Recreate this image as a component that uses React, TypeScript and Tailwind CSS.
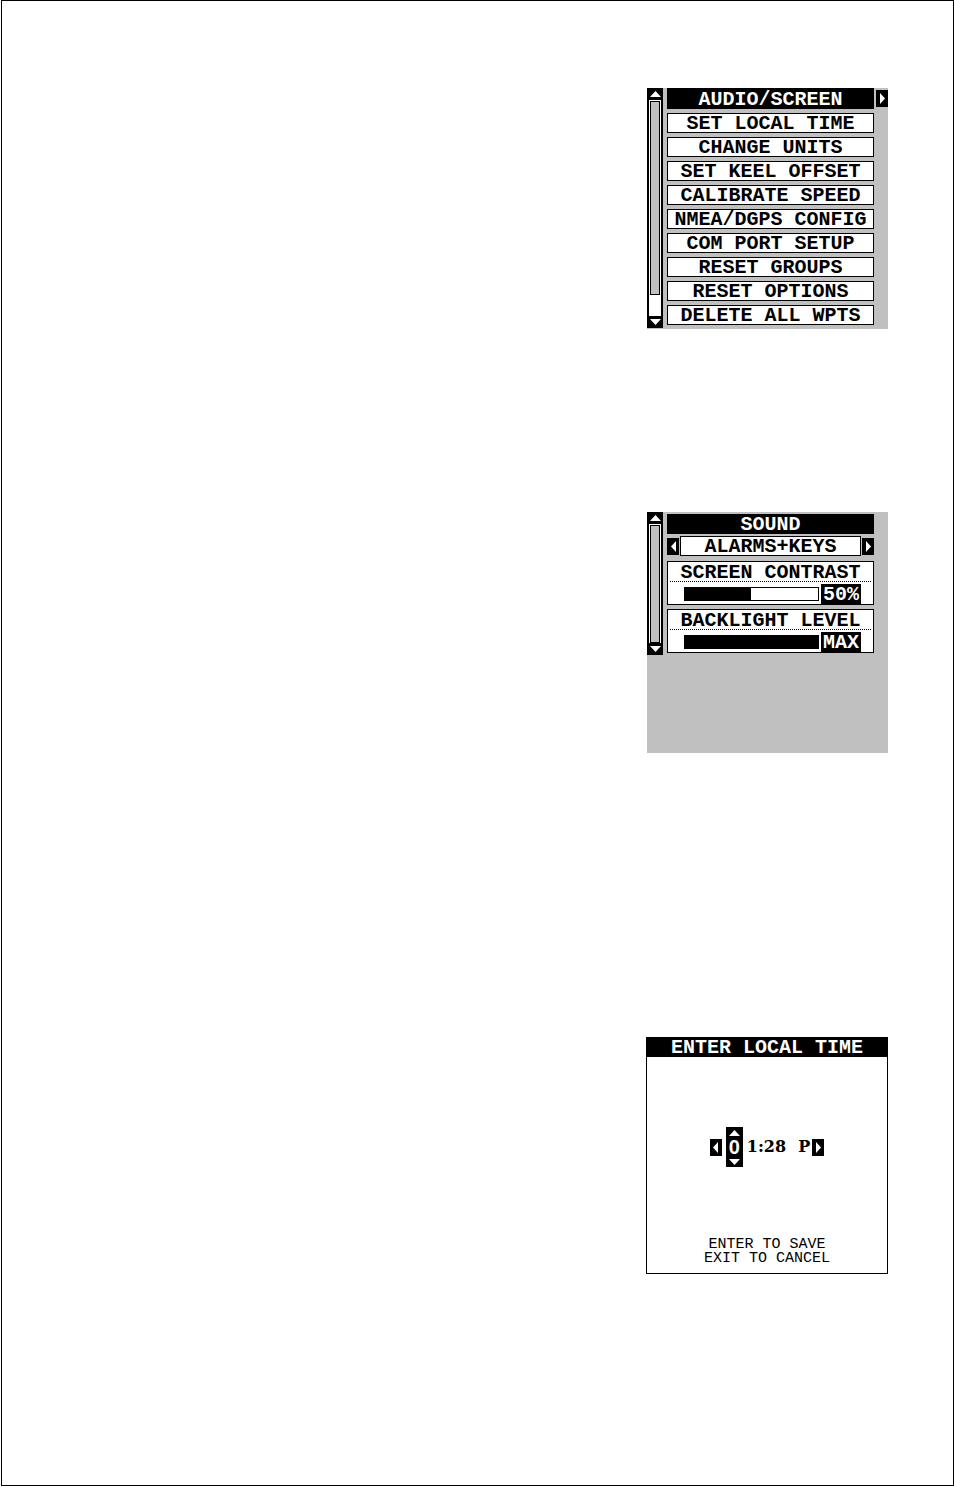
import { useState } from 'react';

type Direction = 'up' | 'down' | 'left' | 'right';

const ARROWS: Record<Direction, string> = {
  up: 'M5.5 0 11 6H0z',
  down: 'M0 0h11L5.5 6z',
  left: 'M5 0v11L0 5.5z',
  right: 'M0 0v11l5-5.5z',
};

const Arrow = ({ direction }: { direction: Direction }) => {
  const vertical = direction === 'up' || direction === 'down';

  return (
    <svg
      className={vertical ? 'w-[11px] h-[6px]' : 'w-[5px] h-[11px]'}
      viewBox={vertical ? '0 0 11 6' : '0 0 5 11'}
      fill="white"
      aria-hidden="true"
    >
      <path d={ARROWS[direction]} />
    </svg>
  );
};

const SideButton = ({ direction, label }: { direction: 'left' | 'right'; label: string }) => (
  <button type="button" aria-label={label} className="flex h-[17px] w-3 shrink-0 items-center justify-center bg-black">
    <Arrow direction={direction} />
  </button>
);

const Scrollbar = ({ visible }: { visible: number }) => (
  <div className="flex w-4 shrink-0 flex-col bg-black">
    <button type="button" aria-label="Scroll up" className="flex h-3 items-center justify-center">
      <Arrow direction="up" />
    </button>
    <div className="mx-0.5 flex-1 bg-white px-px pt-px">
      <div className="border border-black bg-[#c0c0c0]" style={{ height: `${visible}%` }} />
    </div>
    <button type="button" aria-label="Scroll down" className="flex h-3 items-center justify-center">
      <Arrow direction="down" />
    </button>
  </div>
);

const MENU_ITEMS = [
  'SET LOCAL TIME',
  'CHANGE UNITS',
  'SET KEEL OFFSET',
  'CALIBRATE SPEED',
  'NMEA/DGPS CONFIG',
  'COM PORT SETUP',
  'RESET GROUPS',
  'RESET OPTIONS',
  'DELETE ALL WPTS',
];

const MenuScreen = () => (
  <section className="flex w-[241px] gap-1 bg-[#c0c0c0] pb-px">
    <Scrollbar visible={90} />
    <div className="flex flex-1 flex-col gap-1 pb-[3px]">
      <div className="flex items-center gap-0.5">
        <button type="button" className="h-[21px] flex-1 bg-black pt-0.5 leading-5 text-white">
          AUDIO/SCREEN
        </button>
        <SideButton direction="right" label="Open audio and screen" />
      </div>
      {MENU_ITEMS.map((item) => (
        <button
          key={item}
          type="button"
          className="mr-3.5 h-5 whitespace-nowrap border border-black bg-white leading-5"
        >
          {item}
        </button>
      ))}
    </div>
  </section>
);

interface LevelProps {
  id: string;
  title: string;
  initial: number;
}

const Level = ({ id, title, initial }: LevelProps) => {
  const [value, setValue] = useState(initial);

  return (
    <div className="h-11 border border-black bg-white">
      <label htmlFor={id} className="mx-0.5 block h-5 border-b border-dotted border-black text-center leading-[22px]">
        {title}
      </label>
      <div className="flex items-center pl-4 pr-3">
        <input
          id={id}
          type="range"
          min={0}
          max={100}
          value={value}
          onChange={(e) => setValue(Number(e.target.value))}
          className="mt-0.5 mr-0.5 h-3.5 w-full min-w-0 appearance-none border border-black [&::-webkit-slider-thumb]:w-0 [&::-webkit-slider-thumb]:appearance-none"
          style={{ background: `linear-gradient(to right, black ${value}%, white ${value}%)` }}
        />
        <output htmlFor={id} className="mt-0.5 h-5 w-10 shrink-0 bg-black text-center leading-[22px] text-white">
          {value === 100 ? 'MAX' : `${value}%`}
        </output>
      </div>
    </div>
  );
};

const AudioScreen = () => (
  <section className="flex h-[241px] w-[241px] items-start gap-1 bg-[#c0c0c0]">
    <div className="flex h-[143px]">
      <Scrollbar visible={100} />
    </div>
    <div className="mr-3.5 flex flex-1 flex-col pt-0.5">
      <h2 className="h-5 bg-black text-center leading-[22px] text-white">SOUND</h2>
      <div className="mt-0.5 flex items-center gap-px">
        <SideButton direction="left" label="Previous sound setting" />
        <span className="h-5 flex-1 border border-black bg-white text-center leading-5">ALARMS+KEYS</span>
        <SideButton direction="right" label="Next sound setting" />
      </div>
      <div className="mt-[5px] flex flex-col gap-1">
        <Level id="contrast" title="SCREEN CONTRAST" initial={50} />
        <Level id="backlight" title="BACKLIGHT LEVEL" initial={100} />
      </div>
    </div>
  </section>
);

const TimeScreen = () => (
  <section className="flex w-[242px] flex-col border border-black bg-white">
    <h2 className="h-[19px] bg-black text-center leading-5 text-white">ENTER LOCAL TIME</h2>
    <div className="mt-[70px] flex items-center justify-center gap-1">
      <SideButton direction="left" label="Previous digit" />
      <div className="flex w-[17px] flex-col items-center bg-black text-white">
        <button type="button" aria-label="Increase" className="flex h-[11px] items-center">
          <Arrow direction="up" />
        </button>
        <span className="font-['Liberation_Sans',sans-serif] leading-[18px]">0</span>
        <button type="button" aria-label="Decrease" className="flex h-[11px] items-center">
          <Arrow direction="down" />
        </button>
      </div>
      <div className="flex items-center font-['DejaVu_Serif',serif] text-base">
        <span className="mr-3">1:28</span>
        <span className="mr-0.5">P</span>
        <SideButton direction="right" label="Next digit" />
      </div>
    </div>
    <p className="mt-[71px] pb-[7px] text-center text-[15px] font-normal leading-[14px]">
      ENTER TO SAVE
      <br />
      EXIT TO CANCEL
    </p>
  </section>
);

const App = () => (
  <div className="flex min-h-screen bg-white pb-px pl-px font-['Liberation_Mono',monospace] text-xl font-bold text-black">
    <main className="flex flex-1 flex-col items-end border border-black pb-10 pr-[65px] pt-[87px]">
      <MenuScreen />
      <div className="mt-[183px]">
        <AudioScreen />
      </div>
      <div className="mt-[284px]">
        <TimeScreen />
      </div>
    </main>
  </div>
);

export default App;
